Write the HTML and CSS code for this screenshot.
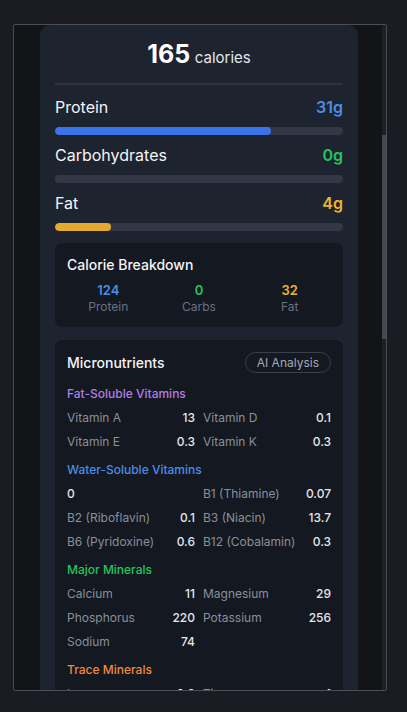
FILE: index.html
```html
<!DOCTYPE html>
<html>
<head>
<meta charset="utf-8">
<link rel="stylesheet" href="styles.css">
</head>
<body>
<div class="page">
  <div class="frame">
    <div class="viewport">
      <div class="card">
        <div class="cal-head"><span class="cal-num">165</span> <span class="cal-unit">calories</span></div>

        <div class="macros">
          <div class="macro">
            <div class="macro-top"><span class="macro-name">Protein</span><span class="macro-val blue">31g</span></div>
            <div class="track"><div class="fill fill-blue" style="width:75%"></div></div>
          </div>
          <div class="macro">
            <div class="macro-top"><span class="macro-name">Carbohydrates</span><span class="macro-val green">0g</span></div>
            <div class="track"><div class="fill fill-green" style="width:0%"></div></div>
          </div>
          <div class="macro">
            <div class="macro-top"><span class="macro-name">Fat</span><span class="macro-val yellow">4g</span></div>
            <div class="track"><div class="fill fill-yellow" style="width:19.5%"></div></div>
          </div>
        </div>

        <div class="box breakdown">
          <div class="box-title">Calorie Breakdown</div>
          <div class="bd-grid">
            <div class="bd-item"><div class="bd-num blue">124</div><div class="bd-label">Protein</div></div>
            <div class="bd-item"><div class="bd-num green">0</div><div class="bd-label">Carbs</div></div>
            <div class="bd-item"><div class="bd-num yellow">32</div><div class="bd-label">Fat</div></div>
          </div>
        </div>

        <div class="box micro">
          <div class="micro-head">
            <div class="box-title">Micronutrients</div>
            <div class="pill">AI Analysis</div>
          </div>

          <div class="section">
            <div class="sec-title purple">Fat-Soluble Vitamins</div>
            <div class="grid">
              <div class="row"><span class="lbl">Vitamin A</span><span class="val">13</span></div>
              <div class="row"><span class="lbl">Vitamin D</span><span class="val">0.1</span></div>
              <div class="row"><span class="lbl">Vitamin E</span><span class="val">0.3</span></div>
              <div class="row"><span class="lbl">Vitamin K</span><span class="val">0.3</span></div>
            </div>
          </div>

          <div class="section">
            <div class="sec-title blue">Water-Soluble Vitamins</div>
            <div class="grid">
              <div class="row"><span class="val">0</span></div>
              <div class="row"><span class="lbl">B1 (Thiamine)</span><span class="val">0.07</span></div>
              <div class="row"><span class="lbl">B2 (Riboflavin)</span><span class="val">0.1</span></div>
              <div class="row"><span class="lbl">B3 (Niacin)</span><span class="val">13.7</span></div>
              <div class="row"><span class="lbl">B6 (Pyridoxine)</span><span class="val">0.6</span></div>
              <div class="row"><span class="lbl">B12 (Cobalamin)</span><span class="val">0.3</span></div>
            </div>
          </div>

          <div class="section">
            <div class="sec-title green">Major Minerals</div>
            <div class="grid">
              <div class="row"><span class="lbl">Calcium</span><span class="val">11</span></div>
              <div class="row"><span class="lbl">Magnesium</span><span class="val">29</span></div>
              <div class="row"><span class="lbl">Phosphorus</span><span class="val">220</span></div>
              <div class="row"><span class="lbl">Potassium</span><span class="val">256</span></div>
              <div class="row"><span class="lbl">Sodium</span><span class="val">74</span></div>
            </div>
          </div>

          <div class="section">
            <div class="sec-title orange">Trace Minerals</div>
            <div class="grid">
              <div class="row"><span class="lbl">Iron</span><span class="val">0.9</span></div>
              <div class="row"><span class="lbl">Zinc</span><span class="val">1</span></div>
              <div class="row"><span class="lbl">Copper</span><span class="val">0.1</span></div>
              <div class="row"><span class="lbl">Selenium</span><span class="val">27</span></div>
            </div>
          </div>
        </div>
      </div>
    </div>
    <div class="scrollbar"><div class="thumb"></div></div>
  </div>
</div>
</body>
</html>
```

FILE: styles.css
```css
html, body {
  margin: 0;
  padding: 0;
}
body {
  background: #1b1b24;
  font-family: Inter, "Liberation Sans", sans-serif;
  color: #f3f4f6;
  -webkit-font-smoothing: antialiased;
}
.page {
  padding: 24px 0 0 13px;
}
.frame {
  position: relative;
  box-sizing: border-box;
  width: 374px;
  height: 667px;
  border: 1px solid #4c4e56;
  border-radius: 2px;
  background: #131418;
  overflow: hidden;
}
.viewport {
  height: 100%;
  overflow: hidden;
  padding-left: 26px;
}
.card {
  box-sizing: border-box;
  width: 318px;
  background: #1e2330;
  border-radius: 10px 10px 0 0;
  padding: 15px 15px 16px;
}
.cal-head {
  text-align: center;
  line-height: 28px;
  padding-bottom: 11px;
  border-bottom: 2px solid #2e3340;
}
.cal-num {
  font-size: 25px;
  font-weight: 700;
  color: #ffffff;
}
.cal-unit {
  font-size: 15px;
  color: #e5e7eb;
}
.macros {
  margin-top: 10px;
  display: flex;
  flex-direction: column;
  gap: 8px;
}
.macro-top {
  display: flex;
  justify-content: space-between;
  font-size: 16px;
  line-height: 24px;
  font-weight: 500;
}
.macro-name {
  color: #f3f4f6;
  font-weight: 400;
}
.macro-val {
  font-weight: 600;
}
.track {
  margin-top: 8px;
  height: 8px;
  border-radius: 4px;
  background: #333846;
  overflow: hidden;
}
.fill {
  height: 100%;
  border-radius: 4px;
}
.fill-blue { background: #3b74e6; }
.fill-green { background: #22c55e; }
.fill-yellow { background: #e4a92f; }
.blue { color: #4b8de8; }
.green { color: #22c55e; }
.yellow { color: #ecb52b; }
.purple { color: #b07ee4; }
.orange { color: #f28a3c; }

.box {
  background: #141821;
  border-radius: 7px;
  padding: 12px;
}
.breakdown {
  margin-top: 12px;
}
.box-title {
  font-size: 14px;
  line-height: 20px;
  font-weight: 500;
  color: #f3f4f6;
}
.bd-grid {
  margin-top: 6px;
  display: grid;
  grid-template-columns: repeat(3, 1fr);
  gap: 8px;
  text-align: center;
}
.bd-num {
  font-size: 13px;
  line-height: 18px;
  font-weight: 600;
}
.bd-label {
  font-size: 12px;
  line-height: 16px;
  color: #6b7280;
}
.micro {
  margin-top: 13px;
  padding-top: 12px;
}
.micro-head {
  display: flex;
  justify-content: space-between;
  align-items: center;
}
.micro-head .box-title {
  margin-top: 1px;
}
.pill {
  box-sizing: border-box;
  height: 21px;
  padding: 0 11px;
  border: 1px solid #3a3f4b;
  border-radius: 11px;
  font-size: 12px;
  line-height: 19px;
  color: #a3a8b2;
}
.section {
  margin-top: 13px;
}
.section + .section {
  margin-top: 8px;
}
.sec-title {
  font-size: 12px;
  line-height: 16px;
  font-weight: 500;
  margin-bottom: 4px;
}
.grid {
  display: grid;
  grid-template-columns: 1fr 1fr;
  column-gap: 8px;
}
.row {
  display: flex;
  justify-content: space-between;
  font-size: 12px;
  line-height: 24px;
}
.lbl {
  color: #8a8f99;
}
.val {
  color: #e5e7eb;
  font-weight: 500;
}
.scrollbar {
  position: absolute;
  top: 0;
  right: 0;
  bottom: 0;
  width: 4px;
  background: #1e2027;
}
.thumb {
  position: absolute;
  left: 0;
  right: 0;
  top: 110px;
  height: 204px;
  background: #434750;
}
```
